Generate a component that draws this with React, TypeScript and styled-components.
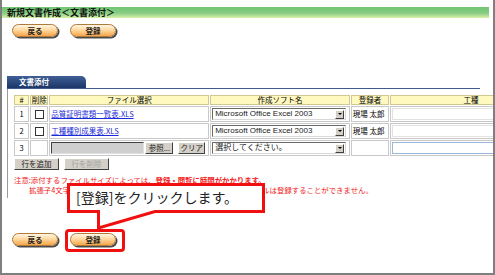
import React from "react";
import styled, { createGlobalStyle } from "styled-components";

const Global = createGlobalStyle`
  html, body { margin: 0; padding: 0; background: #fff; }
  body { font-family: "Noto Sans CJK JP", "Noto Sans", sans-serif; color: #000; }
`;

const Frame = styled.div`
  position: relative;
  box-sizing: border-box;
  width: 495px;
  height: 275px;
  border-left: 2px solid #7f7f7f;
  border-right: 2px solid #7f7f7f;
  border-bottom: 2px solid #7f7f7f;
  padding-top: 7px;
  overflow: hidden;
`;

const TitleBar = styled.div`
  height: 11px;
  margin-right: 4px;
  padding-left: 5px;
  background: linear-gradient(#72c472, #86cd84 55%, #d8f1a6);
  font-size: 9px;
  font-weight: bold;
  line-height: 11px;
  color: #111;
  white-space: nowrap;
`;

const ButtonRow = styled.div<{ $top: number }>`
  display: flex;
  gap: 12px;
  margin-top: ${(p) => p.$top}px;
  padding-left: 10px;
`;

const PillButton = styled.div`
  box-sizing: border-box;
  width: 46px;
  height: 13px;
  border-radius: 7px;
  border: 1px solid #b07a3a;
  background: linear-gradient(#fff6e4, #ffd9a0 45%, #f6a64a);
  box-shadow: 1.5px 1.5px 0 #4a4a4a;
  font-size: 7.5px;
  font-weight: bold;
  line-height: 11px;
  text-align: center;
  color: #222;
`;

const TabStrip = styled.div`
  margin-top: 39px;
  margin-left: 5px;
  width: 473px;
  height: 12px;
  border-bottom: 1px solid #3c5a8c;
`;

const Tab = styled.div`
  width: 79px;
  height: 12px;
  padding-left: 12px;
  box-sizing: border-box;
  border-top-right-radius: 5px;
  background: linear-gradient(#3f5f95, #1c3668);
  color: #fff;
  font-size: 7.5px;
  font-weight: bold;
  line-height: 12px;
`;

const Panel = styled.div`
  margin-left: 5px;
  border-left: 1px solid #9a9a9a;
  padding: 5px 0 3px 5px;
`;

const Table = styled.table`
  border-collapse: separate;
  border-spacing: 1px;
  table-layout: fixed;
  width: 540px;
  font-size: 7.5px;
`;

const Th = styled.th`
  height: 10px;
  padding: 0;
  box-sizing: border-box;
  border: 1px solid #d0c890;
  background: #fff9bf;
  font-weight: normal;
  text-align: center;
  line-height: 8px;
  white-space: nowrap;
`;

const Td = styled.td<{ $center?: boolean }>`
  height: 16px;
  padding: 0 1px;
  box-sizing: border-box;
  border: 1px solid #c8c8c8;
  text-align: ${(p) => (p.$center ? "center" : "left")};
  vertical-align: middle;
  white-space: nowrap;
  overflow: hidden;
  line-height: 12px;
`;

const Check = styled.span`
  display: inline-block;
  width: 7px;
  height: 7px;
  border: 1px solid #333;
  background: #fff;
  vertical-align: middle;
`;

const FileLink = styled.a`
  color: #1b2bd8;
  text-decoration: underline;
`;

const SelectBox = styled.div`
  display: flex;
  align-items: center;
  box-sizing: border-box;
  width: 134px;
  height: 12px;
  border: 1px solid;
  border-color: #6a6a6a #d8d8d8 #d8d8d8 #6a6a6a;
  background: #fff;
  padding-left: 2px;
  font-family: "Liberation Sans", Arial, "Noto Sans CJK JP", sans-serif;
  font-size: 8px;
  line-height: 10px;
  color: #222;
`;

const SelectText = styled.span`
  flex: 1;
  overflow: hidden;
  white-space: nowrap;
`;

const Arrow = styled.span`
  width: 9px;
  height: 9px;
  margin-right: 1px;
  background: #d4d0c8;
  border: 1px solid;
  border-color: #fff #404040 #404040 #fff;
  box-sizing: border-box;
  display: flex;
  align-items: center;
  justify-content: center;
  &::after {
    content: "";
    border-left: 2px solid transparent;
    border-right: 2px solid transparent;
    border-top: 2px solid #000;
  }
`;

const TextInput = styled.div<{ $blue?: boolean }>`
  box-sizing: border-box;
  width: 100%;
  height: 12px;
  border: 1px solid ${(p) => (p.$blue ? "#9ab8dc" : "#e2e2e2")};
  background: #fff;
`;

const FileRow = styled.div`
  display: flex;
  align-items: center;
  gap: 1px;
`;

const FileField = styled.div`
  box-sizing: border-box;
  width: 93px;
  height: 12px;
  border: 1px solid;
  border-color: #404040 #e0e0e0 #e0e0e0 #404040;
  background: #cfcfcf;
`;

const SysButton = styled.div<{ $w: number; $disabled?: boolean; $ml?: number }>`
  box-sizing: border-box;
  width: ${(p) => p.$w}px;
  height: 12px;
  margin-left: ${(p) => p.$ml ?? 0}px;
  border: 1px solid;
  border-color: #fff #404040 #404040 #fff;
  background: #d4d0c8;
  color: ${(p) => (p.$disabled ? "#a0a0a0" : "#222")};
  font-size: 7.5px;
  line-height: 10px;
  text-align: center;
  white-space: nowrap;
`;

const ActionRow = styled.div`
  display: flex;
  gap: 5px;
  margin-top: 1px;
  padding-left: 1px;
`;

const Note = styled.div<{ $indent?: number }>`
  padding-left: ${(p) => p.$indent ?? 0}px;
  color: #f02020;
  font-size: 7.4px;
  line-height: 10px;
  white-space: nowrap;
`;

const Notes = styled.div`
  margin-top: 5px;
  padding-left: 1px;
`;

const Callout = styled.div`
  position: absolute;
  left: 63px;
  top: 181px;
  width: 205px;
  height: 50px;
`;

const CalloutShape = styled.svg`
  position: absolute;
  left: 0;
  top: 0;
`;

const CalloutText = styled.div`
  position: relative;
  padding: 6px 0 0 11px;
  font-size: 14px;
  line-height: 20px;
  color: #222;
  white-space: nowrap;
`;

const Highlight = styled.div`
  position: absolute;
  left: 63px;
  top: 229px;
  width: 60px;
  height: 23px;
  box-sizing: border-box;
  border: 3px solid #f01010;
  border-radius: 4px;
`;

const rows = [
  { n: "1", file: "品質証明書類一覧表.XLS" },
  { n: "2", file: "工種種別成果表.XLS" },
];

export default function App() {
  return (
    <>
      <Global />
      <Frame>
        <TitleBar>新規文書作成＜文書添付＞</TitleBar>
        <ButtonRow $top={6}>
          <PillButton>戻る</PillButton>
          <PillButton>登録</PillButton>
        </ButtonRow>

        <TabStrip>
          <Tab>文書添付</Tab>
        </TabStrip>
        <Panel>
          <Table>
            <colgroup>
              <col style={{ width: 15 }} />
              <col style={{ width: 18 }} />
              <col style={{ width: 158 }} />
              <col style={{ width: 138 }} />
              <col style={{ width: 38 }} />
              <col style={{ width: 160 }} />
            </colgroup>
            <thead>
              <tr>
                <Th>#</Th>
                <Th>削除</Th>
                <Th>ファイル選択</Th>
                <Th>作成ソフト名</Th>
                <Th>登録者</Th>
                <Th>工種</Th>
              </tr>
            </thead>
            <tbody>
              {rows.map((r) => (
                <tr key={r.n}>
                  <Td $center>{r.n}</Td>
                  <Td $center>
                    <Check />
                  </Td>
                  <Td>
                    <FileLink>{r.file}</FileLink>
                  </Td>
                  <Td>
                    <SelectBox>
                      <SelectText>Microsoft Office Excel 2003</SelectText>
                      <Arrow />
                    </SelectBox>
                  </Td>
                  <Td>現場 太郎</Td>
                  <Td>
                    <TextInput />
                  </Td>
                </tr>
              ))}
              <tr>
                <Td $center>3</Td>
                <Td />
                <Td>
                  <FileRow>
                    <FileField />
                    <SysButton $w={28}>参照...</SysButton>
                    <SysButton $w={27} $ml={4}>
                      クリア
                    </SysButton>
                  </FileRow>
                </Td>
                <Td>
                  <SelectBox>
                    <SelectText>選択してください。</SelectText>
                    <Arrow />
                  </SelectBox>
                </Td>
                <Td />
                <Td>
                  <TextInput $blue />
                </Td>
              </tr>
            </tbody>
          </Table>
          <ActionRow>
            <SysButton $w={45}>行を追加</SysButton>
            <SysButton $w={45} $disabled>
              行を削除
            </SysButton>
          </ActionRow>
          <Notes>
            <Note>
              注意:添付するファイルサイズによっては、<b>登録・閲覧に時間がかかります。</b>
            </Note>
            <Note $indent={15}>
              拡張子4文字以上のファイル、及びファイル名に特殊文字を含むファイルは登録することができません。
            </Note>
          </Notes>
        </Panel>

        <ButtonRow $top={35}>
          <PillButton>戻る</PillButton>
          <PillButton>登録</PillButton>
        </ButtonRow>

        <Callout>
          <CalloutShape width="205" height="50" viewBox="0 0 205 50">
            <path
              d="M3.5 3.5 H198.5 V30.5 H90 L33.5 47 V30.5 H3.5 Z"
              fill="#fff"
              stroke="#f01010"
              strokeWidth="3"
              strokeLinejoin="miter"
            />
          </CalloutShape>
          <CalloutText>[登録]をクリックします。</CalloutText>
        </Callout>
        <Highlight />
      </Frame>
    </>
  );
}
